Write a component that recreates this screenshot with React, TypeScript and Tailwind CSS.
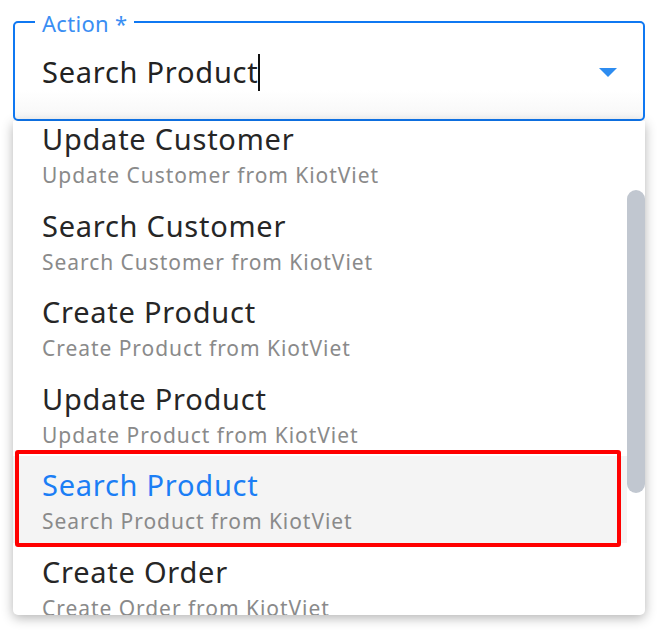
import React from 'react';

const actions = [
  { title: 'Update Customer', desc: 'Update Customer from KiotViet' },
  { title: 'Search Customer', desc: 'Search Customer from KiotViet' },
  { title: 'Create Product', desc: 'Create Product from KiotViet' },
  { title: 'Update Product', desc: 'Update Product from KiotViet' },
  { title: 'Search Product', desc: 'Search Product from KiotViet' },
  { title: 'Create Order', desc: 'Create Order from KiotViet' },
];

export default function App() {
  const selected = 'Search Product';

  return (
    <div className="bg-white w-[660px] h-[631px] overflow-hidden font-['Noto_Sans',sans-serif]">
      <div className="pt-[21px] pl-[13px] w-[645px]">
        {/* Select input */}
        <div className="relative h-[100px] rounded-[5px] border-2 border-[#0f78f2] bg-gradient-to-b from-white from-70% to-[#f7f7f7]">
          <span className="absolute left-[20px] top-[-14px] px-[7px] bg-white text-[22px] leading-[28px] text-[#3a8ef3] tracking-[0.3px]">
            Action *
          </span>
          <div className="flex items-center h-full pl-[27px] pr-[26px]">
            <div className="flex-1 flex items-center mt-[2px]">
              <span className="text-[29px] leading-[36px] text-[#222] tracking-[0.75px]">Search Product</span>
              <span className="ml-[0px] w-[2px] h-[37px] bg-[#111]" />
            </div>
            <svg width="18" height="9" viewBox="0 0 18 9" className="mt-[2px]">
              <path d="M0 0 L18 0 L9 9 Z" fill="#2d8cf0" />
            </svg>
          </div>
        </div>

        {/* Dropdown menu */}
        <div className="relative h-[494px] rounded-b-[5px] bg-white overflow-hidden shadow-[0_3px_12px_rgba(0,0,0,0.3)]">
          <div className="mt-[-11px] mr-[18px]">
            {actions.map((a) => {
              const active = a.title === selected;
              return (
                <div
                  key={a.title}
                  className={`relative h-[86.5px] pt-[11px] pl-[29px] ${active ? 'bg-[#f4f4f4]' : ''}`}
                >
                  <p className={`text-[29px] leading-[36px] tracking-[0.75px] ${active ? 'text-[#1b7ef5]' : 'text-[#262626]'}`}>
                    {a.title}
                  </p>
                  <p className="mt-[4px] text-[21px] leading-[28px] tracking-[0.95px] text-[#8a8a8a]">{a.desc}</p>
                  {active && (
                    <div className="absolute top-[-6px] bottom-[-4px] left-[2px] right-[6px] border-4 border-[#ff0000] rounded-[3px] pointer-events-none" />
                  )}
                </div>
              );
            })}
          </div>
          {/* scrollbar thumb */}
          <div className="absolute right-0 top-[69px] w-[18px] h-[303px] rounded-full bg-[#c1c7d0]" />
        </div>
      </div>
    </div>
  );
}
